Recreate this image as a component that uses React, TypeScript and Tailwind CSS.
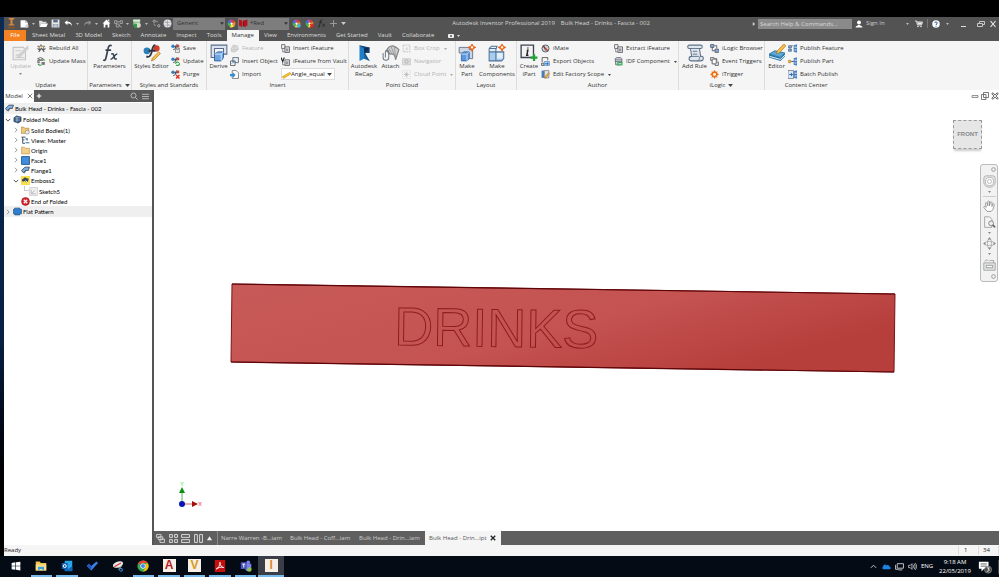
import React from 'react'
import clsx from 'clsx'

type IcoProps = { children: React.ReactNode; className?: string }

const Ico = ({ children, className = 'size-[9px]' }: IcoProps) => (
  <svg viewBox="0 0 16 16" fill="none" aria-hidden="true" className={clsx('shrink-0', className)}>
    {children}
  </svg>
)

const Caret = ({ className = 'text-[#444]' }: { className?: string }) => (
  <svg viewBox="0 0 8 5" aria-hidden="true" className={clsx('h-[3px] w-[5px] shrink-0', className)}>
    <path d="M0 0h8L4 5z" fill="currentColor" />
  </svg>
)

// ---------- icons: quick access bar ----------
const NewIcon = () => <Ico><path d="M1 2h9l4 4v9H1z" fill="#fff" /><path d="M10 2v4h4" stroke="#888" /><path d="M10 10h5v5h-5z" fill="#ccc" /></Ico>
const OpenIcon = () => <Ico><path d="M0 3h5l2 2h6v3H4l-3 6z" fill="#ddd" /><path d="M4 8h12l-3 6H1z" fill="#fff" /></Ico>
const SaveIcon = () => <Ico><path d="M1 1h14v14H1z" fill="#e8e8e8" /><path d="M4 1h8v5H4z" fill="#556a86" /><path d="M3 9h10v6H3z" fill="#8e9db2" /><path d="M5 11h6M5 13h6" stroke="#fff" /></Ico>
const UndoIcon = ({ dim = false }) => (
  <Ico>
    <path d={dim ? 'M15 6l-5-4v3C4 5 2 8 2 13c1-4 4-5 8-5v3z' : 'M1 6l5-4v3c6 0 8 3 8 8-1-4-4-5-8-5v3z'} fill={dim ? '#8d8d8d' : '#fff'} />
  </Ico>
)
const HomeIcon = () => <Ico><path d="M8 1l7 7h-2v7h-3v-5H6v5H3V8H1z" fill="#fff" /><path d="M11 1h2v4l-2-2z" fill="#fff" /></Ico>
const FindIcon = ({ c = '#a8a8a8' }) => <Ico><path d="M1 3h4v5H1zM11 3h4v5h-4zM4 9h5v5H4z" stroke={c} strokeWidth="1.5" /><path d="M5 5h6M9 11l5 4" stroke={c} strokeWidth="1.5" /></Ico>
const MaterialIcon = () => <Ico className="size-[10px]"><path d="M2 1h11v9H2z" fill="#8fc98f" /><path d="M2 1h11v3H2z" fill="#dfe9df" /><circle cx="10" cy="10" r="4" fill="#d8d8d8" /><path d="M3 8h5v6H3z" fill="#2e9e3e" /></Ico>
const LinkIcon = () => <Ico><circle cx="4" cy="4" r="2" stroke="#bbb" strokeWidth="1.5" /><circle cx="12" cy="12" r="2" stroke="#bbb" strokeWidth="1.5" /><path d="M7 4h3v2M4 8v3h3" stroke="#999" strokeWidth="1.5" /></Ico>
const GlobeIcon = () => <Ico><circle cx="8" cy="8" r="7" fill="#e5e5e5" /><path d="M2 6h12M2 11h12M8 1v14M4 3l8 10" stroke="#8b95a0" /></Ico>
const Wheel = ({ mark }: { mark?: string }) => (
  <Ico>
    <path d="M8 8V1a7 7 0 0 1 6 4z" fill="#e23b2e" />
    <path d="M8 8l6-3a7 7 0 0 1-1 8z" fill="#f08a24" />
    <path d="M8 8l5 5a7 7 0 0 1-8 1z" fill="#f7e04a" />
    <path d="M8 8l-3 6a7 7 0 0 1-4-7z" fill="#49b84a" />
    <path d="M8 8L1 7a7 7 0 0 1 3-5z" fill="#3478d8" />
    <path d="M8 8L4 2a7 7 0 0 1 4-1z" fill="#b04bd0" />
    <circle cx="8" cy="8" r="2" fill="#fff" />
    {mark === 'add' && <path d="M12 8v8M8 12h8" stroke="#3db2e8" strokeWidth="2.4" />}
    {mark === 'clear' && <path d="M9 9l6 6M15 9l-6 6" stroke="#e02020" strokeWidth="2.4" />}
  </Ico>
)
const SwatchIcon = () => <Ico><path d="M0 1l6 2v11l-6-2zM7 3l8-2v11H12v3L7 12z" fill="#b5121b" /><path d="M8 5v8" stroke="#6d060c" /></Ico>
const FxIcon = ({ className = 'size-[9px]', c = '#222' }) => (
  <Ico className={className}>
    <path d="M9.500 1.500C7.500.500 6.700 2 6.300 4L4.500 12c-.4 2-1 3-2.500 2.300M4 5.500h5" stroke={c} strokeWidth="1.500" />
    <path d="M9 9c2-1 2 0 2.500 2s1 3 2.500 2M14.500 9c-2-.5-4 5-6 4.600" stroke={c} strokeWidth="1.300" />
  </Ico>
)
const PlusIcon = ({ c = '#999' }) => <Ico><path d="M8 2v12M2 8h12" stroke={c} strokeWidth="1.800" /></Ico>

// ---------- icons: ribbon, small ----------
const RebuildIcon = () => <Ico><path d="M1 4h5l1-3 2 3h5l-3 3 1 3-4-2-4 2 1-3z" stroke="#555" strokeWidth="1.300" /><path d="M3 14l5-6M13 14L8 8M1 8l4 3M15 8l-4 3" stroke="#555" strokeWidth="1.800" /><path d="M8 3l2 2-2 2-2-2z" fill="#f0a030" /></Ico>
const MassIcon = () => <Ico><path d="M1 3l5-2 5 2-5 2zM1 6h10M2 6l-1 4h4z" stroke="#555" strokeWidth="1.400" /><path d="M8 9h6v5H8z" fill="#777" /><path d="M2 12a4 4 0 0 0 6 2M14 6a4 4 0 0 0-4-1" stroke="#2c9a3d" strokeWidth="2" /></Ico>
const StyleIcon = ({ mark }: { mark: string }) => (
  <Ico>
    <circle cx="3.500" cy="4" r="3" fill="#2f7fc1" />
    <circle cx="12.500" cy="3.500" r="2.500" fill="#d9432f" />
    <path d="M11 1C8 1 9 5 8 7s-2 3-4 3M6 5h5" stroke="#333" strokeWidth="1.600" />
    {mark === 'save' && <path d="M8 7h7v8H8zM10 7v3h3V7" stroke="#555" fill="#eee" />}
    {mark === 'update' && <path d="M8 12a3.500 3.500 0 0 1 6-2M15 11a3.500 3.500 0 0 1-6 3" stroke="#27a045" strokeWidth="2" />}
    {mark === 'purge' && <path d="M9 9l6 6M15 9l-6 6" stroke="#e02b20" strokeWidth="2.400" />}
  </Ico>
)
const FeatureIcon = () => <Ico><path d="M2 8l4-6 7 1 2 6-5 5H3z" fill="#dcdcdc" stroke="#b8b8b8" /><path d="M2 9c4 2 8 2 13 0M6 2l3 6" stroke="#b8b8b8" /></Ico>
const ObjectIcon = () => <Ico><path d="M5 1h10v9H5z" fill="#e9edf2" stroke="#4c5c70" strokeWidth="1.400" /><path d="M1 7h8v8H1z" fill="#fff" stroke="#444" strokeWidth="1.400" /><path d="M3 12l4-4M4 8h3v3" stroke="#2f6fb2" strokeWidth="1.300" /></Ico>
const ImportIcon = () => <Ico><path d="M4 1h7l4 4v10H4z" fill="#fff" stroke="#555" strokeWidth="1.200" /><path d="M0 7h5V4l5 5-5 5v-3H0z" fill="#2f8fd0" /></Ico>
const IFeatureIcon = ({ vault = false }) => (
  <Ico>
    {vault ? <path d="M0 1l3 7 3-7" stroke="#222" strokeWidth="2" /> : <path d="M1 1h6v7H1z" fill="#eee" stroke="#555" strokeWidth="1.300" />}
    <path d="M7 5h8v10H7z" fill="#e4e7ec" stroke="#445" strokeWidth="1.300" />
    <path d="M10 8v5M12 8v5M3 9v5h4" stroke="#555" strokeWidth="1.200" />
  </Ico>
)
const RulerIcon = () => <Ico><path d="M0 12L14 4l2 3L3 15z" fill="#f2c230" stroke="#b98a10" strokeWidth=".8" /></Ico>
const BoxCropIcon = () => <Ico><path d="M2 2h12v12H2z" stroke="#bbb" strokeWidth="1.500" strokeDasharray="3 1.500" /><path d="M6 6h5v5H6z" fill="#ddd" /></Ico>
const NavigatorIcon = () => <Ico><path d="M1 3h14v11H1z" fill="#dedede" stroke="#bbb" /><circle cx="8" cy="8" r="3" stroke="#aaa" strokeWidth="1.500" /></Ico>
const CloudIcon = () => <Ico><path d="M1 1h14v14H1z" stroke="#ccc" strokeDasharray="2 2" /><path d="M8 3v10M3 8h10M5 5l6 6M11 5l-6 6" stroke="#bbb" strokeWidth="1.300" /></Ico>
const IMateIcon = () => <Ico><circle cx="8" cy="8" r="6.300" fill="#cfd5dc" stroke="#4b5665" strokeWidth="1.600" /><path d="M4 4l8 8" stroke="#c63a22" strokeWidth="2.600" /><path d="M5 3l3 9" stroke="#333" /></Ico>
const ExportIcon = () => <Ico><path d="M2 1h10v5M2 1v8M5 15H1v-4h4z" stroke="#444" strokeWidth="1.400" /><path d="M6 8h9v7H6z" fill="#bcd8f0" stroke="#2f6fb2" /><path d="M7 11h4V9l3 3-3 3v-2H7z" fill="#2472b8" /></Ico>
const FactoryIcon = () => <Ico><path d="M1 1h5v13H1z" fill="#4a7fb8" /><path d="M6 1h8v13H6z" fill="#dfe3e8" stroke="#555" /><path d="M15 6l-6 8-2 1 0-3 6-7z" fill="#f1b040" stroke="#8a5a10" strokeWidth=".7" /></Ico>
const IdfIcon = () => <Ico><path d="M2 3l3-2h7l2 2v8l-3 3H3z" fill="#c9cfd6" stroke="#4b5560" strokeWidth="1.200" /><path d="M2 5h12M2 8h12" stroke="#4b5560" /><path d="M6 9h9v6H6z" fill="#35a853" /><path d="M8 12h5" stroke="#fff" strokeWidth="1.500" /></Ico>
const ILogicIcon = ({ alt = false }) => (
  <Ico>
    <path d="M1 1h6v5H1zM9 9h6v6H9z" fill={alt ? '#ddd' : '#7fb0dd'} stroke="#445" strokeWidth="1.200" />
    <path d="M4 6v6h5M8 3h4v5" stroke="#445" strokeWidth="1.400" />
    {alt && <path d="M4 4h7v8H4z" fill="#fff" stroke="#555" strokeWidth="1.200" />}
  </Ico>
)
const TriggerIcon = () => <Ico><path d="M8 0l3 4 5 4-5 3-3 5-3-5-5-3 5-4z" fill="#e8711a" /><path d="M3 3l10 10M13 3L3 13" stroke="#e8711a" strokeWidth="2" /><circle cx="8" cy="8" r="2.600" fill="#fff6d8" /></Ico>
const PublishIcon = ({ kind }: { kind: string }) => (
  <Ico>
    {kind === 'feature' && <path d="M1 3h5v4H1zM1 9h5v4H1zM6 3h3" fill="#7eb3e3" stroke="#345" />}
    {kind === 'part' && <><circle cx="3" cy="8" r="2.500" fill="#f5b32f" stroke="#a06a10" /><path d="M6 8h4" stroke="#2a62a8" strokeWidth="2" /></>}
    {kind === 'batch' && <><path d="M0 1h10v14H0z" fill="#e6eef7" stroke="#345" /><path d="M2 7h3V4l4 4-4 4V9H2z" fill="#2a72c0" /></>}
    <path d="M11 2v12M11 3h4M11 8h4M11 13h4" stroke="#2a62a8" strokeWidth="1.500" />
    <path d="M13 1h3v4h-3zM13 6h3v4h-3zM13 11h3v4h-3z" fill="#3d7fd0" />
  </Ico>
)

// ---------- icons: ribbon, large ----------
const BIG = 'size-[18px]'
const UpdateBig = () => <Ico className={BIG}><path d="M1 3h9l2 2v9H1z" fill="#eee" stroke="#c4c4c4" /><path d="M14 1L6 9H3l3 4L15 4z" fill="#d0d0d0" /><path d="M3 6h5M3 12h8" stroke="#ccc" /></Ico>
const FxBig = () => <FxIcon className="size-[18px]" c="#37424f" />
const StylesBig = () => <Ico className={BIG}><circle cx="3.500" cy="6" r="3" fill="#2b7fb8" /><circle cx="12" cy="4" r="2.800" fill="#cf3f2a" /><path d="M11 1C8 1 8.500 5 7.500 8S5 12 3 11M5 6h6" stroke="#2e3640" strokeWidth="1.600" /><path d="M14 7l1.500 1.500L10 14l-2.500 1 .8-2.500z" fill="#f7c04a" stroke="#a87520" strokeWidth=".6" /></Ico>
const DeriveBig = () => <Ico className={BIG}><path d="M1 1h14v8h-3V4H4v8H1z" fill="#d9e2ee" stroke="#5a6c86" strokeWidth=".9" /><path d="M4 9l3-2h5v5l-2 3H4z" fill="#6fa6df" stroke="#2b5f9e" strokeWidth=".8" /><path d="M4 9h6v6M10 9l2-2" stroke="#d6e8fa" strokeWidth=".8" /></Ico>
const RecapBig = () => <Ico className={BIG}><path d="M4 1l9 2v5l-4 0 4 7-5-3z" fill="#16406f" /><path d="M4 1l4 3v9l-4 2z" fill="#1f7fc8" /><path d="M8 4l5-1-4 5z" fill="#0d2c52" /><path d="M8 8l5 7-5-2z" fill="#1a5f9e" /></Ico>
const AttachBig = () => <Ico className={BIG}><path d="M4 6C6 1 10 0 15 5l-3 9c0-4-2-6-5-5z" fill="#cfcfcf" stroke="#7f7f7f" /><path d="M6 4l3 5M8 2l3 8M11 2l1 10" stroke="#999" strokeWidth=".8" /><path d="M1 8v4a2.500 2.500 0 0 0 5 0V7a1.500 1.500 0 0 0-3 0v5" stroke="#6b7787" strokeWidth=".9" /></Ico>
const Spark = () => <><path d="M12.500 0l1 2 2.300 1-2.300 1.200-1 2.300-1.200-2.300L9 3l2.300-1z" fill="#f4761c" stroke="#e2540b" strokeWidth=".7" /><circle cx="12.500" cy="3" r="1" fill="#fff" /></>
const MakePartBig = () => <Ico className={BIG}><path d="M1 3h9v2h3v8H9V8H1z" fill="#cdd6e2" stroke="#65748a" strokeWidth=".8" /><path d="M3 9l2-2h5v6l-2 2H3z" fill="#5d98dc" stroke="#2a5da0" strokeWidth=".7" /><path d="M3 9h5v6M8 9l2-2" stroke="#c9e0f8" strokeWidth=".8" /><Spark /></Ico>
const MakeCompBig = () => <Ico className={BIG}><path d="M1 4l2-2h5v5h6v6l-2 2H1z" fill="#a8cdef" /><path d="M1 4l2-2h5v5H1z" fill="#e9eef4" /><path d="M1 4l2-2h5l-1 3M1 4v11h11l2-2V7H1M7 5v10M1 4h6v4" stroke="#4e7396" strokeWidth=".9" /><path d="M8 8h5v5H8z" fill="#e4eef8" /><Spark /></Ico>
const IPartBig = () => <Ico className={BIG}><path d="M1 1h11v11H1z" fill="#f3f3f3" stroke="#3d4650" strokeWidth="1.200" /><path d="M7 3v1M6 5.500h1L6 10h1.500" stroke="#222" strokeWidth="1.300" /><path d="M12.500 9v6M9.500 12h6" stroke="#1fa332" strokeWidth="2" /></Ico>
const RuleBig = () => <Ico className={BIG}><path d="M3 1h10c2 0 2 3 0 3h-1l1 7h1c2 0 2 4-1 4H5c-3 0-3-4 0-4L4 4H3C1 4 1 1 3 1z" fill="#dfe6ee" stroke="#5f7186" strokeWidth=".9" /><path d="M3 4h9M5 11h6c2 0 1 4-1 4M6 6.500h4M6 9h4" stroke="#5f7186" strokeWidth=".8" /></Ico>
const EditorBig = () => <Ico className={BIG}><path d="M1 9l5-3 9 2-4 4z" fill="#58a8d8" stroke="#1d6190" strokeWidth=".7" /><path d="M1 9l10 3 4-4v3l-4 4-10-3z" fill="#2274ab" /><path d="M1.500 11l9.500 2.700 4-3.700" stroke="#fff" strokeWidth=".8" /><path d="M14 0l2 1.500L10 8l-2.500.700L8.300 6z" fill="#f5bd45" stroke="#9a6a1c" strokeWidth=".5" /></Ico>

// ---------- ribbon building blocks ----------
type Item = { label: string; icon: React.ReactNode; off?: boolean; menu?: boolean }

const SmallButtons = ({ items, children }: { items: Item[]; children?: React.ReactNode }) => (
  <div className="flex flex-col items-start">
    {items.map((item) => (
      <button key={item.label} className={clsx('flex h-[13px] items-center gap-[3px] whitespace-nowrap', item.off ? 'text-[#b4b4b4]' : 'text-[#333]')}>
        {item.icon}
        <span>{item.label}</span>
        {item.menu && <Caret className={clsx('ml-px !h-[2px] !w-[3px]', item.off ? 'text-[#aaa]' : 'text-[#444]')} />}
      </button>
    ))}
    {children}
  </div>
)

const BigButton = ({ label, icon, off, menu, className }: Item & { className: string }) => (
  <button className={clsx('flex shrink-0 flex-col items-center self-start pt-[2px] text-center leading-[8px]', off ? 'text-[#b4b4b4]' : 'text-[#333]', className)}>
    {icon}
    <span>{label}</span>
    {menu && <Caret className="mt-[3px] !h-[2px] !w-[3px] text-[#888]" />}
  </button>
)

const Panel = ({ title, menu, className, children }: { title: string; menu?: boolean; className: string; children: React.ReactNode }) => (
  <section className={clsx('flex shrink-0 flex-col border-r border-[#dcdcdc]', className)}>
    <div className="flex flex-1 pt-px">{children}</div>
    <h2 className="flex h-[9px] items-center justify-center gap-[3px] text-[#333]">
      {title}
      {menu && <Caret />}
    </h2>
  </section>
)

const Ribbon = () => (
  <div className="flex h-[49px] overflow-hidden bg-[#f5f5f5]">
    <Panel title="Update" className="w-[84px]">
      <BigButton label="Update" icon={<UpdateBig />} off menu className="w-[33px]" />
      <SmallButtons items={[{ label: 'Rebuild All', icon: <RebuildIcon /> }, { label: 'Update Mass', icon: <MassIcon /> }]} />
    </Panel>
    <Panel title="Parameters" menu className="w-[44px]">
      <BigButton label="Parameters" icon={<FxBig />} className="w-full" />
    </Panel>
    <Panel title="Styles and Standards" className="w-[75px]">
      <BigButton label="Styles Editor" icon={<StylesBig />} className="w-[39px] whitespace-nowrap" />
      <SmallButtons
        items={[
          { label: 'Save', icon: <StyleIcon mark="save" /> },
          { label: 'Update', icon: <StyleIcon mark="update" /> },
          { label: 'Purge', icon: <StyleIcon mark="purge" /> },
        ]}
      />
    </Panel>
    <Panel title="Insert" className="w-[142px]">
      <BigButton label="Derive" icon={<DeriveBig />} className="w-[23px]" />
      <div className="w-[51px] shrink-0">
        <SmallButtons
          items={[
            { label: 'Feature', icon: <FeatureIcon />, off: true },
            { label: 'Insert Object', icon: <ObjectIcon /> },
            { label: 'Import', icon: <ImportIcon /> },
          ]}
        />
      </div>
      <SmallButtons items={[{ label: 'Insert iFeature', icon: <IFeatureIcon /> }, { label: 'iFeature from Vault', icon: <IFeatureIcon vault /> }]}>
        <label className="flex h-[12px] w-[54px] items-center border border-[#ddd] bg-white pr-[2px]">
          <RulerIcon />
          <select aria-label="Angle preset" className="min-w-0 flex-1 appearance-none bg-transparent text-[#222]">
            <option>Angle_equal</option>
          </select>
          <Caret />
        </label>
      </SmallButtons>
    </Panel>
    <Panel title="Point Cloud" className="w-[107px]">
      <BigButton label="Autodesk ReCap" icon={<RecapBig />} className="w-[30px]" />
      <BigButton label="Attach" icon={<AttachBig />} className="w-[23px]" />
      <SmallButtons
        items={[
          { label: 'Box Crop', icon: <BoxCropIcon />, off: true, menu: true },
          { label: 'Navigator', icon: <NavigatorIcon />, off: true },
          { label: 'Cloud Point', icon: <CloudIcon />, off: true, menu: true },
        ]}
      />
    </Panel>
    <Panel title="Layout" className="w-[61px]">
      <BigButton label="Make Part" icon={<MakePartBig />} className="w-[22px]" />
      <BigButton label="Make Components" icon={<MakeCompBig />} className="w-[38px]" />
    </Panel>
    <Panel title="Author" className="w-[162px]">
      <BigButton label="Create iPart" icon={<IPartBig />} className="w-[24px]" />
      <div className="w-[73px] shrink-0">
        <SmallButtons
          items={[
            { label: 'iMate', icon: <IMateIcon /> },
            { label: 'Export Objects', icon: <ExportIcon /> },
            { label: 'Edit Factory Scope', icon: <FactoryIcon />, menu: true },
          ]}
        />
      </div>
      <SmallButtons items={[{ label: 'Extract iFeature', icon: <IFeatureIcon /> }, { label: 'IDF Component', icon: <IdfIcon />, menu: true }]} />
    </Panel>
    <Panel title="iLogic" menu className="w-[86px]">
      <BigButton label="Add Rule" icon={<RuleBig />} className="w-[31px]" />
      <SmallButtons
        items={[
          { label: 'iLogic Browser', icon: <ILogicIcon /> },
          { label: 'Event Triggers', icon: <ILogicIcon alt /> },
          { label: 'iTrigger', icon: <TriggerIcon /> },
        ]}
      />
    </Panel>
    <Panel title="Content Center" className="w-[82px] border-r-0">
      <BigButton label="Editor" icon={<EditorBig />} className="w-[23px]" />
      <SmallButtons
        items={[
          { label: 'Publish Feature', icon: <PublishIcon kind="feature" /> },
          { label: 'Publish Part', icon: <PublishIcon kind="part" /> },
          { label: 'Batch Publish', icon: <PublishIcon kind="batch" /> },
        ]}
      />
    </Panel>
  </div>
)

// ---------- title bar ----------
const Slot = ({ w = 'w-3', label, children }: { w?: string; label: string; children: React.ReactNode }) => (
  <button aria-label={label} className={clsx('flex h-full shrink-0 items-center justify-center', w)}>{children}</button>
)

const DropSlot = ({ label }: { label: string }) => (
  <Slot w="w-[7px]" label={label}><Caret className="!h-[2px] !w-[3px] text-[#bbb]" /></Slot>
)

const TitleBar = () => (
  <header className="flex h-[13px] items-center">
    <div className="flex h-full shrink-0 items-center">
      <Slot w="w-[14px]" label="Inventor Pro">
        <Ico className="size-[11px]"><path d="M4 0h8v2h-2.500v7H12v2H4V9h2.500V2H4z" fill="#d98a3a" /><path d="M3 13h10v2H3z" fill="#8a5526" /></Ico>
      </Slot>
      <Slot label="New"><NewIcon /></Slot>
      <DropSlot label="New options" />
      <Slot label="Open"><OpenIcon /></Slot>
      <Slot w="w-[13px]" label="Save"><SaveIcon /></Slot>
      <Slot label="Undo"><UndoIcon /></Slot>
      <DropSlot label="Undo history" />
      <Slot label="Redo"><UndoIcon dim /></Slot>
      <DropSlot label="Redo history" />
      <Slot label="Home"><HomeIcon /></Slot>
      <Slot label="Select"><FindIcon /></Slot>
      <DropSlot label="Select options" />
      <Slot label="Material"><MaterialIcon /></Slot>
      <DropSlot label="Material options" />
      <Slot label="Link"><LinkIcon /></Slot>
      <Slot w="w-[11px]" label="Appearance browser"><GlobeIcon /></Slot>
      <label className="flex h-[12px] w-[52px] items-center bg-[#7d7d7d] pr-px pl-[4px]">
        <select aria-label="Material" className="min-w-0 flex-1 appearance-none text-[#333]">
          <option>Generic</option>
        </select>
        <Caret className="!w-[4px] text-[#333]" />
      </label>
      <Slot w="w-[13px]" label="Colour wheel"><Wheel /></Slot>
      <label className="flex h-[12px] w-[51px] items-center gap-[2px] bg-[#7d7d7d] px-px">
        <SwatchIcon />
        <select aria-label="Appearance" className="min-w-0 flex-1 appearance-none text-[#333]">
          <option>*Red</option>
        </select>
        <Caret className="!w-[4px] text-[#333]" />
      </label>
      <Slot w="w-[14px]" label="Adjust"><Wheel mark="add" /></Slot>
      <Slot label="Clear"><Wheel mark="clear" /></Slot>
      <Slot label="Parameters"><FxIcon /></Slot>
      <Slot label="Add"><PlusIcon /></Slot>
      <Slot w="w-[9px]" label="Customise"><Caret className="text-[#ccc]" /></Slot>
    </div>
    <h1 className="flex flex-1 justify-center gap-[6px] pl-[4px] whitespace-nowrap text-[#d4d4d4]">
      <span>Autodesk Inventor Professional 2019</span>
      <span>Bulk Head - Drinks - Fascia - 002</span>
    </h1>
    <div className="flex h-full shrink-0 items-center text-[#ccc]">
      <svg viewBox="0 0 5 8" className="h-[4px] w-[8px]"><path d="M0 0l5 4-5 4z" fill="#ccc" /></svg>
      <input aria-label="Search" placeholder="Search Help & Commands..." className="h-[10px] w-[94px] bg-[#8a8a8a] px-[2px] placeholder:text-[#d8d8d8]" />
      <button className="flex w-[52px] items-center gap-[3px] pl-[3px]">
        <Ico className="size-[8px]"><circle cx="8" cy="5" r="4" fill="#fff" /><path d="M1 15c0-3 4-3 6-5h2c2 2 6 2 6 5z" fill="#fff" /></Ico>
        Sign In
      </button>
      <DropSlot label="Account options" />
      <Slot w="w-[16px]" label="App store">
        <Ico className="size-[8px]"><path d="M0 2h3l2 8h8l2-6H4" stroke="#eee" strokeWidth="1.800" /><path d="M5 5h9l-1 4H6z" fill="#eee" /><circle cx="6" cy="13" r="1.500" fill="#eee" /><circle cx="12" cy="13" r="1.500" fill="#eee" /></Ico>
      </Slot>
      <span className="h-[9px] w-px bg-[#777]" />
      <Slot w="w-[16px]" label="Help">
        <Ico className="size-[8px]"><circle cx="8" cy="8" r="7.500" fill="#fff" /><path d="M5.500 6C5.500 3 10.500 3 10.500 6c0 2-2.500 2-2.500 4M8 11.500v2" stroke="#2b5c9c" strokeWidth="2" /></Ico>
      </Slot>
      <DropSlot label="Help options" />
      <Slot w="w-[24px]" label="Minimise"><Ico className="size-[8px]"><path d="M4 13h10" stroke="#ddd" strokeWidth="2" /></Ico></Slot>
      <Slot w="w-[12px]" label="Restore"><Ico className="size-[8px]"><path d="M5 6V3h10v6h-3M1 7h10v6H1z" stroke="#ddd" strokeWidth="1.700" /></Ico></Slot>
      <Slot w="w-[12px]" label="Close"><Ico className="size-[8px]"><path d="M3 2l10 12M13 2L3 14" stroke="#eee" strokeWidth="2.200" /></Ico></Slot>
    </div>
  </header>
)

const tabs = ['Sheet Metal', '3D Model', 'Sketch', 'Annotate', 'Inspect', 'Tools', 'Manage', 'View', 'Environments', 'Get Started', 'Vault', 'Collaborate']

const RibbonTabs = () => (
  <nav className="flex h-[11px] items-stretch whitespace-nowrap text-[#ddd]">
    <button className="mr-px w-[22px] bg-[#f58220] text-white">File</button>
    {tabs.map((tab) => (
      <button key={tab} className={clsx('px-[5px]', tab === 'Manage' && 'bg-[#f5f5f5] text-[#333]')}>{tab}</button>
    ))}
    <button aria-label="Ribbon display" className="flex items-center gap-[3px] pl-[9px]">
      <svg viewBox="0 0 6 4" className="h-[4px] w-[6px]"><rect width="6" height="4" rx="1" fill="#eee" /><circle cx="3" cy="2" r="1" fill="#555" /></svg>
      <Caret className="!h-[2px] !w-[3px] text-[#ddd]" />
    </button>
  </nav>
)

// ---------- model browser ----------
const FlangeIcon = () => <Ico className="size-[9px]"><path d="M1 8l6-6h8l-2 6H8l-4 4z" fill="#7fb0e0" stroke="#26384d" strokeWidth="1.300" /><path d="M8 8l-2 5" stroke="#26384d" strokeWidth="1.500" /></Ico>
const FoldedIcon = () => <Ico><path d="M1 5l5-4 9 2v8l-6 4-8-3z" fill="#34547a" /><path d="M4 5h8M4 9h8M7 3v10" stroke="#cfe2f5" /></Ico>
const BodiesIcon = () => <Ico><path d="M0 2h5l2 2h7v9H0z" fill="#f0c877" stroke="#9c7430" /><circle cx="11" cy="11" r="3.500" fill="#eee" stroke="#777" /></Ico>
const ViewIcon = () => <Ico><path d="M1 2h7M3 2v11h4M3 7h3" stroke="#345" strokeWidth="1.600" /><path d="M8 5h3v3M8 12h7" stroke="#2b6cb0" strokeWidth="2" /></Ico>
const FolderIcon = () => <Ico><path d="M1 2h5l2 2h7v10H1z" fill="#f3cf8a" stroke="#b28a45" /></Ico>
const FaceIcon = () => <Ico><path d="M1 1h14v14H1z" fill="#3f8fdc" stroke="#1d4e86" strokeWidth="1.500" /></Ico>
const EmbossIcon = () => <Ico><path d="M0 0h16v16H0z" fill="#f8e04c" /><path d="M1 7l6-5 3 2 4 1-3 7-4-3-4 1z" fill="#3b4656" /><path d="M8 8l5 5" stroke="#fff" strokeWidth="1.500" /></Ico>
const SketchIcon = () => <Ico><path d="M1 1h14v14H1z" fill="#efefef" stroke="#bbb" /><path d="M4 12V5M4 12h8M5 11l5-5" stroke="#999" /></Ico>
const EndIcon = () => <Ico><circle cx="8" cy="8" r="7" fill="#d9232e" stroke="#8d1018" /><path d="M5 5l6 6M11 5l-6 6" stroke="#fff" strokeWidth="2.200" /></Ico>
const FlatIcon = () => <Ico><path d="M3 2h9v2h3v8h-3v2H3v-2H1V4h2z" fill="#2f7fd0" stroke="#184a80" strokeWidth="1.200" /></Ico>

type Node = { label: string; icon: React.ReactNode; pad: string; state?: 'open' | 'closed'; tall?: boolean; shade?: boolean }

const nodes: Node[] = [
  { label: 'Bulk Head - Drinks - Fascia - 002', icon: <FlangeIcon />, pad: 'pl-px', tall: true, shade: true },
  { label: 'Folded Model', icon: <FoldedIcon />, pad: 'pl-px', state: 'open', tall: true },
  { label: 'Solid Bodies(1)', icon: <BodiesIcon />, pad: 'pl-[9px]', state: 'closed' },
  { label: 'View: Master', icon: <ViewIcon />, pad: 'pl-[9px]', state: 'closed' },
  { label: 'Origin', icon: <FolderIcon />, pad: 'pl-[9px]', state: 'closed' },
  { label: 'Face1', icon: <FaceIcon />, pad: 'pl-[9px]', state: 'closed' },
  { label: 'Flange1', icon: <FlangeIcon />, pad: 'pl-[9px]', state: 'closed' },
  { label: 'Emboss2', icon: <EmbossIcon />, pad: 'pl-[9px]', state: 'open', tall: true },
  { label: 'Sketch5', icon: <SketchIcon />, pad: 'pl-[25px]' },
  { label: 'End of Folded', icon: <EndIcon />, pad: 'pl-[17px]' },
  { label: 'Flat Pattern', icon: <FlatIcon />, pad: 'pl-px', state: 'closed', tall: true, shade: true },
]

const ModelBrowser = () => (
  <aside className="flex w-[150px] shrink-0 flex-col border-r-2 border-[#555] bg-white">
    <div className="flex h-[12px] items-center bg-[#5a5a5a]">
      <button className="flex h-full w-[30px] items-center justify-center gap-[4px] bg-white text-[#333]">
        Model
        <Ico className="size-[6px]"><path d="M2 2l12 12M14 2L2 14" stroke="#555" strokeWidth="2" /></Ico>
      </button>
      <button aria-label="Add tab" className="px-[2px]"><Ico className="size-[6px]"><path d="M8 2v12M2 8h12" stroke="#fff" strokeWidth="3" /></Ico></button>
      <button aria-label="Search model" className="ml-auto"><Ico className="size-[8px]"><circle cx="7" cy="7" r="5" stroke="#ccc" strokeWidth="1.600" /><path d="M11 11l4 4" stroke="#ccc" strokeWidth="1.800" /></Ico></button>
      <button aria-label="Browser menu" className="pr-[3px] pl-[4px]"><Ico className="size-[7px]"><path d="M0 3h16M0 8h16M0 13h16" stroke="#ccc" strokeWidth="1.800" /></Ico></button>
    </div>
    <ul className="pt-px font-['Lato','Liberation_Sans',sans-serif] text-black">
      {nodes.map((n) => (
        <li key={n.label} className={clsx('flex items-center', n.pad, n.tall ? 'h-[11px]' : 'h-[10px]', n.shade && 'bg-[#efefef]')}>
          {n.state && (
            <Ico className="mr-[2px] size-[6px]">
              <path d={n.state === 'open' ? 'M2 5l6 6 6-6' : 'M5 2l6 6-6 6'} stroke={n.state === 'open' ? '#333' : '#888'} strokeWidth="2.200" />
            </Ico>
          )}
          {n.label === 'Sketch5' && <span className="-ml-[5px] h-[5px] w-[5px] self-start border-b border-l border-[#ccc]" />}
          {n.icon}
          <span className="pl-px whitespace-nowrap">{n.label}</span>
        </li>
      ))}
    </ul>
  </aside>
)

// ---------- 3D viewport ----------
const NavBar = () => (
  <div className="absolute top-[74px] right-px flex w-[18px] flex-col items-center gap-[3px] rounded-[3px] border border-[#bbb] bg-[#f2f2f2] py-[2px]">
    <Ico className="mr-px size-[5px] self-end"><circle cx="8" cy="8" r="6" stroke="#999" strokeWidth="3" /></Ico>
    <button aria-label="Steering wheel"><Ico className="size-[13px]"><path d="M4 1h8a3 3 0 0 1 3 3v5a6 6 0 0 1-6 6H7a6 6 0 0 1-6-6V4a3 3 0 0 1 3-3z" fill="#e3e5e8" stroke="#aaa" /><circle cx="8" cy="8" r="5" fill="#fff" stroke="#aaa" /><circle cx="8" cy="8" r="2.500" stroke="#aaa" /></Ico></button>
    <Caret className="!h-[2px] !w-[3px] text-[#888]" />
    <span className="h-px w-[13px] bg-[#ccc]" />
    <button aria-label="Pan"><Ico className="size-[13px]"><path d="M5 14L1 9c0-2 2-1 3 0L3 4c0-1 1.500-1 2 0l1 3V2c0-1 2-1 2 0v5l1-4c0-1 2-1 2 0v5l1-3c1-1 2 0 2 1l-2 6-2 2z" fill="#fff" stroke="#888" /></Ico></button>
    <button aria-label="Zoom"><Ico className="size-[13px]"><path d="M2 1h6l3 3v10H2z" fill="#f4f4f4" stroke="#999" /><circle cx="10" cy="9" r="3" fill="#e9eef3" stroke="#777" /><path d="M12 11l3 3" stroke="#666" strokeWidth="2" /></Ico></button>
    <Caret className="!h-[2px] !w-[3px] text-[#888]" />
    <button aria-label="Orbit"><Ico className="size-[13px]"><ellipse cx="8" cy="8" rx="6" ry="2.500" stroke="#aaa" /><ellipse cx="8" cy="8" rx="2.500" ry="6" stroke="#aaa" /><path d="M6 3l2-3 2 3zM6 13l2 3 2-3zM3 6L0 8l3 2zM13 6l3 2-3 2z" fill="#888" /></Ico></button>
    <Caret className="!h-[2px] !w-[3px] text-[#888]" />
    <button aria-label="Look at"><Ico className="size-[13px]"><path d="M1 6h14v9H1z" fill="#e4e7ea" stroke="#999" /><path d="M4 9h8v3H4z" fill="#fff" stroke="#888" /><path d="M2 4l3-2 2 2M8 3h5v3" stroke="#999" /></Ico></button>
    <Ico className="mr-px size-[5px] self-end"><circle cx="8" cy="8" r="6" stroke="#999" strokeWidth="3" /></Ico>
  </div>
)

const Viewport = () => (
  <div className="relative flex min-h-0 flex-1 bg-white">
    <svg viewBox="0 0 845 441" className="h-full w-full" role="img" aria-label="Fascia sheet with embossed lettering">
      <defs>
        <linearGradient id="face" x1="0" y1="0" x2="1" y2=".5">
          <stop offset="0" stopColor="#c75a58" />
          <stop offset=".6" stopColor="#c45351" />
          <stop offset="1" stopColor="#b63e3b" />
        </linearGradient>
      </defs>
      <path d="M78 194L741 204L740 282L77 272z" fill="url(#face)" stroke="#7d1215" strokeWidth="1" />
      <path d="M78 194L741 204M77 272L740 282" stroke="#5d0508" strokeWidth="1.200" />
      <text x="240" y="255" transform="rotate(.86 240 255)" fontFamily="Liberation Sans, Arial, sans-serif" fontSize="54" fill="none" stroke="#8f1a1c" strokeWidth="1">DRINKS</text>
    </svg>

    <div className="absolute top-[2px] right-0 flex gap-[2px]">
      <button aria-label="Minimise document"><Ico className="size-[8px]"><path d="M2 7h12v4H2z" fill="#eee" stroke="#777" strokeWidth="1.500" /></Ico></button>
      <button aria-label="Restore document"><Ico className="size-[8px]"><path d="M5 1h10v10H5zM1 5h9v10H1z" fill="#fff" stroke="#666" strokeWidth="1.700" /></Ico></button>
      <button aria-label="Close document"><Ico className="size-[8px]"><path d="M2 2l12 12M14 2L2 14" stroke="#555" strokeWidth="4" /><path d="M3 3l10 10M13 3L3 13" stroke="#fff" strokeWidth="1.800" /></Ico></button>
    </div>

    <button className="absolute top-[30px] right-[17px] flex h-[29px] w-[29px] items-center justify-center border border-dashed border-[#999] bg-[#e6e6e6] font-['Liberation_Sans',sans-serif] font-bold text-[#8a8a8a] shadow-[0_3px_2px_-1px_#ccc]">
      FRONT
    </button>

    <NavBar />

    <svg viewBox="0 0 26 28" className="absolute bottom-[21px] left-[23px] h-[28px] w-[26px]" aria-label="Axes">
      <path d="M5 22V9" stroke="#5fae5f" strokeWidth="1" />
      <path d="M2 11l3-6 3 6z" fill="#0a8f14" />
      <path d="M5 22h10" stroke="#c66" strokeWidth="1" />
      <path d="M15 19l6 3-6 3z" fill="#a80d0d" />
      <circle cx="5" cy="22" r="3" fill="#0a14b4" />
      <text x="3" y="4" fontSize="6" fill="#3be03b" fontFamily="Liberation Sans, sans-serif">Y</text>
      <text x="21" y="24" fontSize="6" fill="#f03030" fontFamily="Liberation Sans, sans-serif">X</text>
    </svg>
  </div>
)

const docs = ['Narre Warren -B...iam', 'Bulk Head - Coff...iam', 'Bulk Head - Drin...iam']

const DocumentTabs = () => (
  <div className="flex h-[14px] shrink-0 items-stretch bg-[#5f5f5f] whitespace-nowrap text-[#ccc]">
    <div className="flex w-[64px] items-center justify-between border-r border-[#8a8a8a] pr-[4px] pl-[2px]">
      <button aria-label="Cascade"><Ico><path d="M1 1h8v5H1zM4 5h8v5H4zM7 9h8v6H7z" fill="#5f5f5f" stroke="#ddd" strokeWidth="1.500" /></Ico></button>
      <button aria-label="Tile"><Ico><path d="M1 1h5v5H1zM10 1h5v5h-5zM1 10h5v5H1zM10 10h5v5h-5z" stroke="#ddd" strokeWidth="1.700" /></Ico></button>
      <button aria-label="Tile rows"><Ico><path d="M1 1h14v5H1zM1 10h14v5H1z" stroke="#ddd" strokeWidth="1.700" /></Ico></button>
      <button aria-label="Tile columns"><Ico><path d="M1 1h5v14H1zM10 1h5v14h-5z" stroke="#ddd" strokeWidth="1.700" /></Ico></button>
      <button aria-label="More documents"><Ico className="size-[7px]"><path d="M2 12h12L8 3z" fill="#eee" /></Ico></button>
    </div>
    {docs.map((doc) => (
      <button key={doc} className="w-[69px] px-[3px] text-left">{doc}</button>
    ))}
    <button className="flex w-[76px] items-center justify-between bg-[#f5f5f5] pr-[5px] pl-[4px] text-[#555]">
      Bulk Head - Drin...ipt
      <Ico className="size-[6px]"><path d="M2 2l12 12M14 2L2 14" stroke="#222" strokeWidth="3.500" /></Ico>
    </button>
  </div>
)

// ---------- taskbar ----------
const TB = 'size-[12px]'
const LetterIcon = ({ letter, c }: { letter: string; c: string }) => (
  <span className={clsx("flex size-[13px] items-center justify-center bg-[#f7efe6] font-['Liberation_Sans',sans-serif] text-[12px] leading-[13px] font-bold", c)}>{letter}</span>
)

const apps = [
  { name: 'Start', icon: <Ico className="size-[10px]"><path d="M1 3l6-1v5.500H1zM8 2l7-1v6.500H8zM1 8.500h6V14l-6-1zM8 8.500h7V15l-7-1z" fill="#fff" /></Ico> },
  { name: 'File Explorer', run: true, icon: <Ico className={TB}><path d="M1 2h5l2 2h7v10H1z" fill="#f5c64f" /><path d="M1 6h14v8H1z" fill="#fbe08c" /><path d="M4 9h8v5h-2v-2H6v2H4z" fill="#3aa0e0" /></Ico> },
  { name: 'Outlook', run: true, icon: <Ico className={TB}><path d="M5 1h10v13H5z" fill="#28a8ea" /><path d="M5 8l5 4 5-4v7H5z" fill="#1066b8" /><path d="M1 4h8v8H1z" fill="#0f5fb4" /><circle cx="5" cy="8" r="2" stroke="#fff" strokeWidth="1.300" /></Ico> },
  { name: 'To Do', icon: <Ico className={TB}><path d="M1 8l3-3 3 3 7-6 2 2-9 10z" fill="#3b7fe8" /><path d="M1 8l3-3 4 4-2 4z" fill="#2255b8" /></Ico> },
  { name: 'Snipping Tool', icon: <Ico className={TB}><ellipse cx="8" cy="6" rx="7" ry="4" transform="rotate(-20 8 6)" fill="#e8e8e8" /><path d="M3 9l9-5" stroke="#d33" strokeWidth="1.500" /><path d="M7 9l6 3M8 13l5-5" stroke="#bbb" /><circle cx="12" cy="13" r="2" stroke="#3a8edb" strokeWidth="1.300" /></Ico> },
  { name: 'Chrome', run: true, icon: <Ico className={TB}><circle cx="8" cy="8" r="7.500" fill="#34a853" /><path d="M8 .5A7.500 7.500 0 0 1 14.500 4H8a4 4 0 0 0-4 3L1.500 4.300A7.500 7.500 0 0 1 8 .5z" fill="#ea4335" /><path d="M14.500 4.500A7.500 7.500 0 0 1 8 15.500l3.500-6L11 5z" fill="#fbbc05" /><circle cx="8" cy="8" r="3.500" fill="#fff" /><circle cx="8" cy="8" r="2.700" fill="#4285f4" /></Ico> },
  { name: 'AutoCAD', run: true, icon: <LetterIcon letter="A" c="text-[#b3202a]" /> },
  { name: 'Vault', run: true, icon: <LetterIcon letter="V" c="text-[#d49a1e]" /> },
  { name: 'Acrobat', run: true, icon: <Ico className={TB}><path d="M1 0h14v16H1z" fill="#c20f0f" /><path d="M3 12c3-1 5-5 5-9 0 4 2 7 5 7-4-1-7 0-10 2z" stroke="#fff" strokeWidth="1.200" /></Ico> },
  { name: 'Teams', run: true, icon: <Ico className={TB}><circle cx="11" cy="3" r="2.500" fill="#7b83eb" /><path d="M7 5h8v6a4 4 0 0 1-8 0z" fill="#7b83eb" /><path d="M1 3h8v9H1z" fill="#4b53bc" /><path d="M3 5.500h4M5 5.500V10" stroke="#fff" strokeWidth="1.300" /><circle cx="12.500" cy="12.500" r="3" fill="#8bc34a" /></Ico> },
  { name: 'Inventor', run: true, active: true, icon: <LetterIcon letter="I" c="text-[#d98a3a]" /> },
]

const Taskbar = () => (
  <footer className="flex h-[21px] shrink-0 items-stretch bg-[#050b14] pl-[3px] text-white">
    <div className="grid w-[281px] grid-cols-11">
      {apps.map((app) => (
        <button key={app.name} aria-label={app.name} className={clsx('flex flex-col', app.active ? 'bg-[#3a3f47]' : 'px-[2px]')}>
          <span className="flex w-full flex-1 items-center justify-center">{app.icon}</span>
          <span className={clsx('h-[2px] w-full', app.run && 'bg-[#76b9ed]')} />
        </button>
      ))}
    </div>
    <div className="ml-auto flex items-center">
      <button aria-label="Hidden icons" className="w-[12px]"><Ico className="size-[7px]"><path d="M2 11l6-6 6 6" stroke="#ddd" strokeWidth="2" /></Ico></button>
      <div className="flex items-center gap-[4px] pr-[4px]">
        <Ico><path d="M2 13a3 3 0 0 1 0-5c0-3 4-5 6-2 3-2 5 0 5 2 3 0 3 5 1 5z" fill="#1a84e0" /></Ico>
        <Ico><path d="M4 3h11v8H4zM1 5v8h5M6 14h7" stroke="#ddd" strokeWidth="1.500" /></Ico>
        <Ico><path d="M1 6h3l3-3v10l-3-3H1zM9 5c1 2 1 4 0 6M11 3c2 3 2 7 0 10M13 2c3 4 3 8 0 12" stroke="#ddd" strokeWidth="1.300" /></Ico>
      </div>
      <span className="w-[17px]">ENG</span>
      <time className="w-[34px] text-center leading-[9px]">9:18 AM<br />22/05/2019</time>
      <button aria-label="Notifications" className="ml-[6px] flex w-[21px] border-r border-[#444]">
        <Ico className="size-[14px]"><path d="M1 2h11v8H7l-3 3v-3H1z" fill="#fff" /><path d="M3 4.500h7M3 7h7" stroke="#555" /><circle cx="11.500" cy="11" r="4" fill="#444" stroke="#aaa" strokeWidth=".7" /><path d="M10 9h3l-1.500 1.500c2 0 2 2.500-1.500 2.300" stroke="#fff" /></Ico>
      </button>
    </div>
  </footer>
)

export default function App() {
  return (
    <div className="flex h-screen flex-col bg-black font-['Open_Sans',sans-serif] text-[6px] leading-[9px]">
      <div className="flex min-h-0 flex-1 pt-[17px]">
        <div className="w-[4px] shrink-0 bg-linear-to-b from-[#0b2a52] from-0% via-[#082043] via-60% to-black to-95%" />
        <div className="flex min-w-0 flex-1 flex-col">
          <div className="bg-[#535353]">
            <TitleBar />
            <RibbonTabs />
          </div>
          <Ribbon />
          <main className="flex min-h-0 flex-1">
            <ModelBrowser />
            <div className="flex min-w-0 flex-1 flex-col">
              <Viewport />
              <DocumentTabs />
            </div>
          </main>
          <div className="flex h-[11px] shrink-0 items-center bg-[#f5f5f5] text-[#222]">
            <span className="flex-1">Ready</span>
            <span className="w-[20px] border-l border-[#ddd] pl-[5px]">1</span>
            <span className="w-[21px] border-x border-[#ddd] pl-[4px]">34</span>
          </div>
        </div>
      </div>
      <Taskbar />
    </div>
  )
}
